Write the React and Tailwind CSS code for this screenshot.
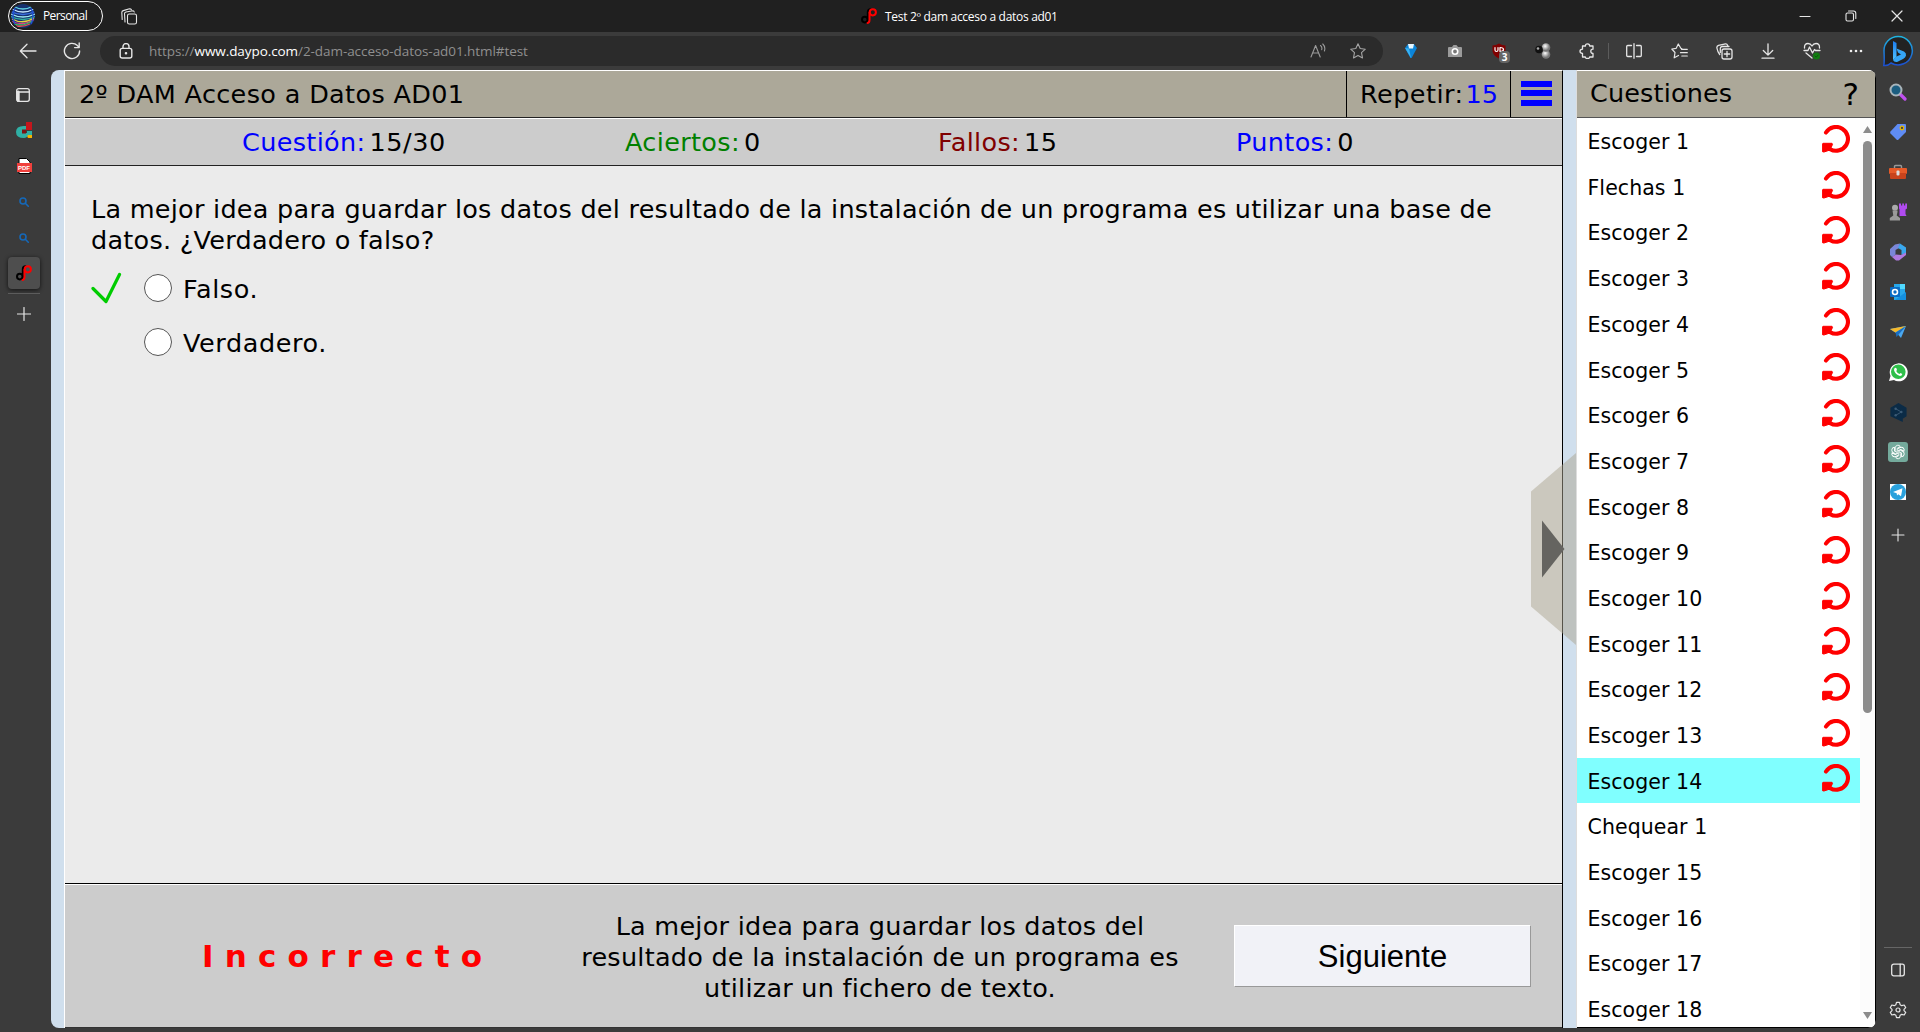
import React from "react";

const ITEMS = [
  "Escoger 1", "Flechas 1", "Escoger 2", "Escoger 3", "Escoger 4", "Escoger 5", "Escoger 6",
  "Escoger 7", "Escoger 8", "Escoger 9", "Escoger 10", "Escoger 11", "Escoger 12", "Escoger 13",
  "Escoger 14", "Chequear 1", "Escoger 15", "Escoger 16", "Escoger 17", "Escoger 18",
];

const Svg = ({ s = 16, w = 1.2, className = "", children, box }) => (
  <svg width={s} height={s} viewBox={box || `0 0 ${s} ${s}`} fill="none" stroke="#e6e6e6" strokeWidth={w}
    strokeLinecap="round" strokeLinejoin="round" className={`shrink-0 ${className}`}>
    {children}
  </svg>
);

const Logo = () => (
  <Svg s={16} w={2}>
    <circle cx="3.8" cy="11.6" r="2.8" stroke="#000" />
    <path d="M6.8 12V4Q7 1.2 9.5 1.2" stroke="#000" />
    <path d="M6.6 14.9Q8.5 14.6 8.5 12V4.6" stroke="#f00" />
    <circle cx="11.8" cy="4.3" r="3.1" stroke="#f00" />
  </Svg>
);

const Redo = () => (
  <svg width="28" height="29" viewBox="0 0 28 29" fill="none" className="shrink-0">
    <path d="M4 7.500A11.900 11.900 0 1 1 8.200 24.200" stroke="#f00" strokeWidth="4.100" strokeLinecap="round" />
    <path d="M1 18.300H10Q11.200 19 9.800 21L8 25L2 27Q.4 27.200.3 26V19Z" fill="#f00" stroke="#f00" strokeWidth="1" strokeLinejoin="round" />
  </svg>
);

const Cell = ({ className = "", children }) => (
  <div className={`flex shrink-0 items-center justify-center ${className}`}>{children}</div>
);

function TitleBar() {
  return (
    <div className="grid h-8 shrink-0 grid-cols-[861px_1fr_138px] items-center bg-[#202020] font-['Open_Sans',sans-serif] text-white">
      <div className="flex items-center pl-2">
        <div className="flex h-[30px] w-[95px] items-center gap-2 rounded-full border-[1.5px] border-white pl-[2px]">
          <svg width="24" height="24" viewBox="0 0 24 24">
            <defs>
              <clipPath id="av"><circle cx="12" cy="12" r="12" /></clipPath>
            </defs>
            <g clipPath="url(#av)" fill="none" strokeWidth="1.300">
              <rect width="24" height="24" fill="#16306e" />
              <path d="M2 2q10 6 20 0" stroke="#5fd0e0" />
              <path d="M1 5q11 6 22 0" stroke="#c8e8ff" />
              <path d="M0 7.500q12 6 24 0" stroke="#3a6ee0" />
              <path d="M0 10q12 6 24 0" stroke="#9fe8f0" />
              <path d="M0 12.500q12 6 24 0" stroke="#30b0a0" />
              <path d="M1 15q11 6 22 -1" stroke="#e8d040" />
              <path d="M1 17.500q11 5 22 -2" stroke="#d8408a" />
              <path d="M3 20q10 3 18 -3" stroke="#38c060" />
              <path d="M5 22q8 1 14 -2" stroke="#e85050" />
              <path d="M20 4q4 8 0 16M4 4q-4 8 0 16" stroke="#2050d8" />
            </g>
          </svg>
          <span className="text-[12px] tracking-[-0.6px]">Personal</span>
        </div>
        <Svg s={17} w={1.1} className="ml-[18px]">
          <rect x="6.500" y="6" width="9" height="10" rx="1.800" />
          <path d="M4 14L3.500 5.800Q3.500 4.300 5 4L12 2.800Q13 3 13.200 4M1.200 11.500L.8 4.500Q.8 3 2.300 2.600L8.500 .8Q10 .8 10.400 1.800" />
        </Svg>
      </div>
      <div className="flex items-center gap-2">
        <Logo />
        <span className="pt-px text-[12px] tracking-[-0.3px]">Test 2º dam acceso a datos ad01</span>
      </div>
      <div className="flex">
        <Cell className="w-[46px]"><Svg s={12} w={1.1}><path d="M1 6.5H11" /></Svg></Cell>
        <Cell className="w-[46px]">
          <Svg s={12} w={1.1}>
            <rect x="1" y="3" width="7.5" height="8" rx="1.5" />
            <path d="M3.5 1H8.5Q10.8 1 10.8 3.5V8.5" />
          </Svg>
        </Cell>
        <Cell className="w-[46px]"><Svg s={12} w={1.2}><path d="M1 1L11 11M11 1L1 11" /></Svg></Cell>
      </div>
    </div>
  );
}

function Toolbar() {
  return (
    <div className="flex h-[38px] shrink-0 items-center bg-[#3b3b3b]">
      <Cell className="ml-[6px] w-11">
        <Svg s={18} w={1.3}><path d="M17 9H1.500M8 2.200L1.300 9L8 15.800" /></Svg>
      </Cell>
      <Cell className="w-11">
        <Svg s={18} w={1.4}><path d="M16.600 9A7.600 7.600 0 1 1 14.400 3.600L16 5.400M16.200 1V5.600H11.600" /></Svg>
      </Cell>
      <div className="ml-[6px] flex h-[30px] w-[1283px] items-center rounded-full bg-[#2b2b2b] font-['Open_Sans',sans-serif]">
        <Svg s={16} w={1.4} className="ml-[18px]">
          <rect x="2.200" y="5.400" width="11.600" height="9.600" rx="2" />
          <path d="M5 5.400V3.600a3 3 0 0 1 6 0V5.400" />
          <circle cx="8" cy="10.200" r=".6" fill="#fff" />
        </Svg>
        <span className="ml-[15px] flex-1 pt-px text-[13.5px] tracking-[-0.07px] text-[#8f8f8f]">
          https://<span className="text-white">www.daypo.com</span>/2-dam-acceso-datos-ad01.html#test
        </span>
        <Cell className="w-10">
          <Svg s={16} w={1.1} className="opacity-60">
            <path d="M1 14L5.600 2.500L10.200 14M2.600 10H8.600M10.500 2.500q2 1.600 1.200 4.200M12.800 1q3 2.800 1.600 7" />
          </Svg>
        </Cell>
        <Cell className="mr-[5px] w-10">
          <Svg s={16} w={1.1} className="opacity-65">
            <path d="M8 .8L10.200 5.500L15.300 6.200L11.500 9.700L12.500 14.900L8 12.400L3.500 14.900L4.500 9.700L.7 6.200L5.800 5.500Z" />
          </Svg>
        </Cell>
      </div>
      <Cell className="ml-[6px] w-11">
        <Svg s={16} w={0}>
          <path d="M5 1H11L14 5L8.600 15H7.400L2 5Z" fill="#0b84d8" />
          <path d="M5 1H11L10 5.500H6Z" fill="#e6f7ff" />
          <path d="M2 5L6 5.500L8 15Z" fill="#39b2f2" />
        </Svg>
      </Cell>
      <Cell className="w-11">
        <Svg s={16} w={0}>
          <path d="M2 4H5L6.500 2H9.500L11 4H14Q15 4 15 5V14H1V5Q1 4 2 4Z" fill="#9b9b9b" />
          <circle cx="8" cy="8.500" r="2.700" fill="#777" stroke="#fff" strokeWidth="1.600" />
        </Svg>
      </Cell>
      <Cell className="w-11">
        <div className="relative h-4 w-4">
          <Svg s={16} w={0}>
            <path d="M8 .5Q11 2.500 14.500 2.500V8Q14 13 8 15.500Q2 13 1.500 8V2.500Q5 2.500 8 .5Z" fill="#800000" />
            <path d="M4 4.500V7q0 1.500 1.500 1.500T7 7V4.500M9 8.500v-4q3.500 0 3.500 2T9 8.500" stroke="#fff" strokeWidth="1.200" />
          </Svg>
          <span className="absolute left-2 top-[8px] flex h-3 w-[11px] items-center justify-center rounded-sm bg-[#666] font-['Open_Sans',sans-serif] text-[10px] font-bold text-white">3</span>
        </div>
      </Cell>
      <Cell className="w-11">
        <Svg s={18} w={0}>
          <defs>
            <radialGradient id="ball" cx=".4" cy=".35"><stop offset="0" stopColor="#fff" /><stop offset="1" stopColor="#777" /></radialGradient>
          </defs>
          <circle cx="12" cy="12.500" r="4.300" fill="url(#ball)" />
          <circle cx="12" cy="5.500" r="4.300" fill="url(#ball)" />
          <circle cx="5" cy="7.500" r="3.800" fill="#111" />
          <circle cx="4" cy="6.500" r="1.300" fill="#aaa" />
        </Svg>
      </Cell>
      <Cell className="w-[43px]">
        <Svg s={16} w={1.3}>
          <path d="M3.500 3H6.500Q6.300 .8 8.500 .8T10.700 3H14V6.200Q11.800 6.200 11.800 8.300T14 10.500V14H10.700Q10.700 15.500 8.500 15.500T6.300 14H3.500V10.500Q1 10.300 1 8.300T3.500 6.200Z" />
        </Svg>
      </Cell>
      <div className="h-4 w-px bg-[#5c5c5c]" />
      <Cell className="ml-[3px] w-11">
        <Svg s={16} w={1.3}><path d="M5.500 2.500H1.700Q.7 2.500 .7 3.500V12.500Q.7 13.500 1.700 13.500H5.500M10.500 2.500H14.300Q15.300 2.500 15.300 3.500V12.500Q15.300 13.500 14.300 13.500H10.500M8 .7V15.300" /></Svg>
      </Cell>
      <Cell className="w-[46px]">
        <Svg s={17} w={1.2}><path d="M10.800 5.500H10L7.300 1L5.200 5.300L.8 6L4 9.500L3.200 14.800L7.500 12.500M10.500 6.300H16.300M9.500 9.700H16.300M10.800 13H16.300" /></Svg>
      </Cell>
      <Cell className="w-11">
        <Svg s={17} w={1.3}>
          <rect x="6" y="6" width="10" height="10" rx="2" />
          <path d="M11 8.300V13.700M8.300 11H13.700M3.700 11.500Q1.600 9 .9 5Q.6 3 2.500 2.300L9.500 .9Q11 .7 11.700 2.500M4.300 9.500V5.500Q4.500 3.500 6.500 3.500H13" />
        </Svg>
      </Cell>
      <Cell className="w-11"><Svg s={16} w={1.300}><path d="M8 .8V12M3.300 7.500L8 12.100L12.700 7.500M2 15.200H14" /></Svg></Cell>
      <Cell className="w-11">
        <Svg s={18} w={1.300}>
          <path d="M1.500 6Q1.200 1.500 5 1.500Q7.500 1.500 9 4Q10.500 1.500 13 1.500Q16.800 1.500 16.500 6M1 8.500H5L6.500 5L9.500 11L11.500 7.500L12.500 8.500H17M3 11L9 16" />
          <circle cx="13.500" cy="14" r="3.500" fill="#107c10" stroke="none" />
          <path d="M12 14L13.200 15.200L15.200 13" strokeWidth=".8" stroke="#0a4f0a" />
        </Svg>
      </Cell>
      <Cell className="w-11">
        <Svg s={16} w={0}>
          <circle cx="3" cy="8" r="1.300" fill="#eee" /><circle cx="8" cy="8" r="1.300" fill="#eee" /><circle cx="13" cy="8" r="1.300" fill="#eee" />
        </Svg>
      </Cell>
      <Cell className="w-[40px]">
        <svg width="32" height="36" viewBox="0 0 32 36" fill="none">
          <defs>
            <linearGradient id="bg1" x1="0" y1="0" x2="0" y2="1"><stop offset="0" stopColor="#1fb4e0" /><stop offset="1" stopColor="#1c4fd0" /></linearGradient>
            <linearGradient id="bg2" x1="0" y1="0" x2="0" y2="1"><stop offset="0" stopColor="#1c7df0" /><stop offset="1" stopColor="#4fc3ff" /></linearGradient>
          </defs>
          <path d="M16 3.500A14.200 14.200 0 1 1 9 30Q6 33 1.800 32.500Q2.500 30 2 18A14.200 14.200 0 0 1 16 3.500Z" fill="#222" stroke="url(#bg1)" strokeWidth="1.500" />
          <path d="M11 8L14.500 10V24L11 27Z" fill="url(#bg2)" />
          <path d="M11 27L14.500 23.500L19 21.500L16 19.500L14.500 15.500L22 18.500Q24.500 20 24 22.500Q23.500 24.500 21 26L15 29Q12 29.500 11 27Z" fill="#35a5f5" />
        </svg>
      </Cell>
    </div>
  );
}

const SearchBlue = () => (
  <Svg s={10} w={1.600}><circle cx="4" cy="4" r="3" stroke="#1568b8" /><path d="M6.300 6.300L9.300 9.300" stroke="#1568b8" /></Svg>
);

function LeftRail() {
  return (
    <div className="flex w-[51px] shrink-0 flex-col items-start bg-[#3b3b3b] pl-[5px] pt-[8px]">
      <Cell className="h-[34px] w-9">
        <Svg s={14} w={1.300}><rect x=".7" y=".7" width="12.600" height="12.600" rx="2" /><path d="M.7 4H13.300" /><path d="M2.200 4V12.500" strokeWidth="3" /></Svg>
      </Cell>
      <Cell className="h-9 w-[38px]">
        <Svg s={16} w={0}>
          <path d="M10 0H16V8H10Z" fill="#c4161c" />
          <path d="M10 12H16V16H12Z" fill="#f5b400" />
          <path d="M10 4Q0 3 0 10Q0 16 8 16Q11 16 12 13H16V9H11V11H6V8H10Z" fill="#2fb0a5" />
          <path d="M6 7.500h4v4H6z" fill="#7a1414" />
        </Svg>
      </Cell>
      <Cell className="h-9 w-[38px]">
        <div className="relative flex h-4 w-[15px] items-center justify-center">
          <svg width="13" height="16" viewBox="0 0 13 16"><path d="M1 .5H8.500L12 4V15.500H1Z" fill="#fff" stroke="#000" /></svg>
          <span className="absolute left-0 top-[5px] flex h-[9px] w-[15px] items-center justify-center bg-[#f0403c] font-['Liberation_Sans',sans-serif] text-[6px] font-bold text-white">PDF</span>
        </div>
      </Cell>
      <Cell className="h-9 w-[38px]"><SearchBlue /></Cell>
      <Cell className="h-9 w-[38px]"><SearchBlue /></Cell>
      <Cell className="ml-[3px] mt-px h-8 w-8 rounded bg-[#4e4e4e] shadow-[0_1px_4px_rgba(0,0,0,0.7)]"><Logo /></Cell>
      <div className="ml-[3px] mt-1 h-px w-8 bg-[#5c5c5c]" />
      <Cell className="h-[39px] w-[37px]"><Svg s={14} w={1.200}><path d="M7 0.500V13.500M.5 7H13.500" /></Svg></Cell>
    </div>
  );
}

function RightRail() {
  return (
    <div className="flex w-11 shrink-0 flex-col items-center bg-[#3b3b3b] pt-[2px]">
      <Cell className="h-10">
        <Svg s={18} w={2}>
          <path d="M11.500 11.500L16 16" stroke="#c050f0" strokeWidth="3.200" />
          <circle cx="7" cy="7" r="5.500" fill="#1b5d80" stroke="#a8b4ba" />
        </Svg>
      </Cell>
      <Cell className="h-10">
        <Svg s={18} w={0}><path d="M8.500 1H16Q17 1 17 2V9L9.500 16.500Q8.500 17.500 7.500 16.500L1.500 10.500Q.7 9.500 1.500 8.500Z" fill="#5f8cf5" /><circle cx="13" cy="5" r="1.800" fill="#444" stroke="#e6b800" strokeWidth="1.300" /></Svg>
      </Cell>
      <Cell className="h-10">
        <Svg s={18} w={0}><path d="M5.500 6V3.500Q5.500 2.500 6.500 2.500H11.500Q12.500 2.500 12.500 3.500V6" stroke="#999" strokeWidth="1.400" /><rect y="5" width="18" height="6" rx="1" fill="#e65a28" /><path d="M1 10H17V15Q17 16 16 16H2Q1 16 1 15Z" fill="#c8431c" /><rect x="7.500" y="7.500" width="3" height="5" rx="1" fill="#ddd" /></Svg>
      </Cell>
      <Cell className="h-10">
        <Svg s={18} w={0}>
          <path d="M10 .5H12V2.500H13.200V.5H15V2.500H16.200V.5H18V5.500L16.500 6.500V11L17.500 13H10.500V6.500L10 5.500Z" fill="#b04bf0" />
          <circle cx="6" cy="4.800" r="3" fill="#aaa" />
          <path d="M3.500 7.500H8.500V9L7.700 12.500L11 15V17.500H.8V15L4.300 12.500Z" fill="#9a9a9a" />
        </Svg>
      </Cell>
      <Cell className="h-10">
        <Svg s={18} w={0}>
          <path d="M6 1.500L11 .5L10 5L6.500 7V12L3 14L1 12V6Z" fill="#7a86d8" />
          <path d="M11 .5L17 4.500V10L12.500 12V7L9 5Z" fill="#3aa8ee" />
          <path d="M3 14L7 11.500L12 12L17 9.500V12L10 17.500H7Z" fill="#b07ae0" />
        </Svg>
      </Cell>
      <Cell className="h-10">
        <Svg s={18} w={0}><path d="M5 1H16V9L17 17H5Z" fill="#28a8ea" /><path d="M11 1h5v5h-5z" fill="#50d9ff" /><path d="M6 17L17 9V17Z" fill="#1490df" /><rect x="1" y="4" width="10" height="10" rx="1" fill="#0a6cc4" /><circle cx="6" cy="9" r="2.500" stroke="#fff" strokeWidth="1.600" /></Svg>
      </Cell>
      <Cell className="h-10">
        <Svg s={18} w={0}><path d="M1 6L17 3L12 15L8.500 11Z" fill="#4aa8f0" /><path d="M1 6L17 3L6.500 9.500Z" fill="#f5b82a" /><path d="M6.500 9.500L17 3L7.500 14Z" fill="#1a6ec0" /></Svg>
      </Cell>
      <Cell className="h-10">
        <Svg s={20} w={0}><path d="M1 19L2.500 14A9 9 0 1 1 6 18Z" fill="#fff" /><circle cx="10.300" cy="9.800" r="7.300" fill="#2fbf4a" /><path d="M7 5.800L8.300 6L9 8L8.200 9Q9.500 11.500 11.500 12L12.500 11L14.300 12Q14 14 12 14Q7 12.500 6 8Q6 6.500 7 5.800Z" fill="#fff" /></Svg>
      </Cell>
      <Cell className="h-10">
        <Svg s={19} w={0} box="0 0 18 20"><path d="M9 0L17.500 5V14L13.500 16.500V20L9 18L.5 14V5Z" fill="#0b2b46" /><path d="M6 6L12 9.500L6 13" stroke="#3b5a75" strokeWidth="1" /><circle cx="6" cy="6" r="1.300" fill="#3b5a75" /><circle cx="12" cy="9.500" r="1.300" fill="#3b5a75" /><circle cx="6" cy="13" r="1.300" fill="#3b5a75" /></Svg>
      </Cell>
      <Cell className="h-10">
        <div className="flex h-5 w-5 items-center justify-center rounded-[3px] bg-[#74aa9c]">
          <Svg s={16} w={.9}>
            {[0, 60, 120, 180, 240, 300].map((a) => (
              <path key={a} transform={`rotate(${a} 8 8)`} d="M5.200 6.400V3.800A2.800 2.800 0 0 1 10.300 2.500L7.200 4.400V7.400" stroke="#fff" />
            ))}
          </Svg>
        </div>
      </Cell>
      <Cell className="h-10">
        <Svg s={16} w={0}><rect width="16" height="16" fill="#fff" /><circle cx="8" cy="8" r="8" fill="#2aa1dc" /><path d="M3 8L12.500 4.200L11 12.200L8.300 10.300L7 11.500L6.700 9.300Z" fill="#fff" /></Svg>
      </Cell>
      <Cell className="mt-[3px] h-10"><Svg s={14} w={1.100}><path d="M7 1V13M1 7H13" /></Svg></Cell>
      <div className="mt-auto h-px w-7 bg-[#666]" />
      <Cell className="mt-[2px] h-10">
        <Svg s={14} w={1.300}><rect x=".7" y="1.200" width="12.600" height="11.600" rx="2" /><path d="M9.200 1.200V12.800" /></Svg>
      </Cell>
      <Cell className="mb-[2px] h-10">
        <Svg s={18} w={1.200}>
          <path d="M7.500 1.300H10.500L11.100 3.700L12.800 4.700L15.200 4L16.700 6.600L15 8.300V9.700L16.700 11.400L15.200 14L12.800 13.300L11.100 14.300L10.500 16.700H7.500L6.900 14.300L5.200 13.300L2.800 14L1.300 11.400L3 9.700V8.300L1.300 6.600L2.800 4L5.200 4.700L6.900 3.700Z" />
          <circle cx="9" cy="9" r="2" />
        </Svg>
      </Cell>
    </div>
  );
}

const Stat = ({ label, value, className }) => (
  <div className="flex gap-[4px]">
    <span className={`tracking-[0.35px] ${className}`}>{label}</span>
    <span className="tracking-[0.55px]">{value}</span>
  </div>
);

const Option = ({ ok, text }) => (
  <div className="flex h-[54px] items-center">
    <div className="w-[53px]">
      {ok && (
        <svg width="32" height="32" viewBox="0 0 32 32" fill="none" stroke="#0c0" strokeWidth="3.200" strokeLinecap="round" strokeLinejoin="round">
          <path d="M2 16.500L15 29.500L28.500 2.500" />
        </svg>
      )}
    </div>
    <div className="h-7 w-7 rounded-full border-[1.5px] border-[#555] bg-white" />
    <span className="ml-[11px] mt-[4px] tracking-[0.6px]">{text}</span>
  </div>
);

function Quiz() {
  return (
    <div className="flex w-[1499px] shrink-0 flex-col border-l border-t border-r border-l-white border-r-black border-t-white bg-[#ebebeb]">
      <div className="flex h-[47px] shrink-0 border-b border-[#222] bg-[#aca899]">
        <div className="flex flex-1 items-center pl-[14px] pt-px tracking-[0.35px]">2º DAM Acceso a Datos AD01</div>
        <div className="flex w-[164px] items-center border-l border-black pl-[13px] pt-px">
          <span className="tracking-[0.45px]">Repetir:</span>
          <span className="ml-[2px] text-[#00f]">15</span>
        </div>
        <div className="flex w-[52px] flex-col items-center justify-center gap-[3.5px] border-l border-black pb-[2px]">
          <div className="h-[6px] w-[31px] bg-[#00f]" />
          <div className="h-[6px] w-[31px] bg-[#00f]" />
          <div className="h-[6px] w-[31px] bg-[#00f]" />
        </div>
      </div>
      <div className="flex h-12 shrink-0 items-center border-b border-t border-b-[#222] border-t-white bg-[#ccc] pl-[177px] pt-[2px]">
        <div className="w-[383px]"><Stat label="Cuestión:" value="15/30" className="text-[#00f]" /></div>
        <div className="w-[313px]"><Stat label="Aciertos:" value="0" className="text-[#008000]" /></div>
        <div className="w-[298px]"><Stat label="Fallos:" value="15" className="text-[#800000]" /></div>
        <Stat label="Puntos:" value="0" className="text-[#00f]" />
      </div>
      <div className="flex-1 pl-[26px] pt-[28px]">
        <p className="w-[1440px] leading-[31px] tracking-[0.26px]">
          La mejor idea para guardar los datos del resultado de la instalación de un programa es utilizar una base de
          <br />datos. ¿Verdadero o falso?
        </p>
        <div className="mt-[5px]">
          <Option ok text="Falso." />
          <Option text="Verdadero." />
        </div>
      </div>
      <div className="flex h-[145px] shrink-0 border-b border-t border-b-[#333] border-t-black">
        <div className="flex flex-1 items-center border-t border-white bg-[#ccc]">
          <div className="w-[500px] pl-[137px] text-[31px] font-bold tracking-[11.2px] text-[#f00]">Incorrecto</div>
          <div className="w-[630px] pt-[2px] text-center leading-[31px] tracking-[0.25px]">
            La mejor idea para guardar los datos del
            <br />resultado de la instalación de un programa es
            <br />utilizar un fichero de texto.
          </div>
          <button className="ml-[39px] h-[62px] w-[297px] border border-b-[#999] border-l-white border-r-[#999] border-t-white bg-[#f1f2f7] font-['Liberation_Sans',Arial,sans-serif] text-[31px]">
            Siguiente
          </button>
        </div>
      </div>
    </div>
  );
}

function Panel() {
  return (
    <div className="flex flex-1 flex-col border-b border-r border-t border-b-black border-r-black border-t-white bg-white">
      <div className="flex h-[47px] shrink-0 items-center justify-between border-b border-[#555] bg-[#aca899] pl-[13px] pr-4">
        <span className="tracking-[0.15px]">Cuestiones</span>
        <span className="text-[31px]">?</span>
      </div>
      <div className="flex min-h-0 flex-1">
        <div className="min-h-0 flex-1 overflow-hidden text-[20.5px]">
          {ITEMS.map((t, i) => (
            <div key={t} className={`flex h-[45.7px] items-center justify-between pl-[10.5px] pr-[10px] ${i === 14 ? "bg-[#80ffff]" : ""}`}>
              <span className="pt-[3px] tracking-[0.07px]">{t}</span>
              {i < 15 && <div className="-mt-[3px]"><Redo /></div>}
            </div>
          ))}
        </div>
        <div className="flex w-[15px] flex-col items-center bg-[#fcfcfc] pb-2 pt-2">
          <svg width="9" height="7" viewBox="0 0 9 7"><path d="M4.500 0L9 7H0Z" fill="#8b8b8b" /></svg>
          <div className="mt-2 h-[572px] w-[9px] rounded-full bg-[#8b8b8b]" />
          <svg width="9" height="7" viewBox="0 0 9 7" className="mt-auto"><path d="M0 0H9L4.500 7Z" fill="#8b8b8b" /></svg>
        </div>
      </div>
    </div>
  );
}

export default function App() {
  return (
    <div className="flex h-[1032px] w-[1920px] flex-col overflow-hidden bg-[#3b3b3b] font-['DejaVu_Sans',Verdana,sans-serif] text-[25.5px] leading-none text-black">
      <TitleBar />
      <Toolbar />
      <div className="flex min-h-0 flex-1">
        <LeftRail />
        <div className="mb-1 flex flex-1 overflow-hidden rounded-lg">
          <div className="w-[13px] shrink-0 bg-[#d0dfed]" />
          <Quiz />
          <div className="relative w-[14px] shrink-0 border-r border-[#ddd] bg-[#d0dfed]">
            <svg width="45" height="192" viewBox="0 0 45 192" className="absolute right-0 top-[383px]">
              <path d="M0 38.500L45 0V192L0 153.500Z" fill="#aba592" fillOpacity=".5" />
              <path d="M11 67.500L33.500 96L11 124.500Z" fill="#656460" />
            </svg>
          </div>
          <Panel />
        </div>
        <RightRail />
      </div>
    </div>
  );
}
